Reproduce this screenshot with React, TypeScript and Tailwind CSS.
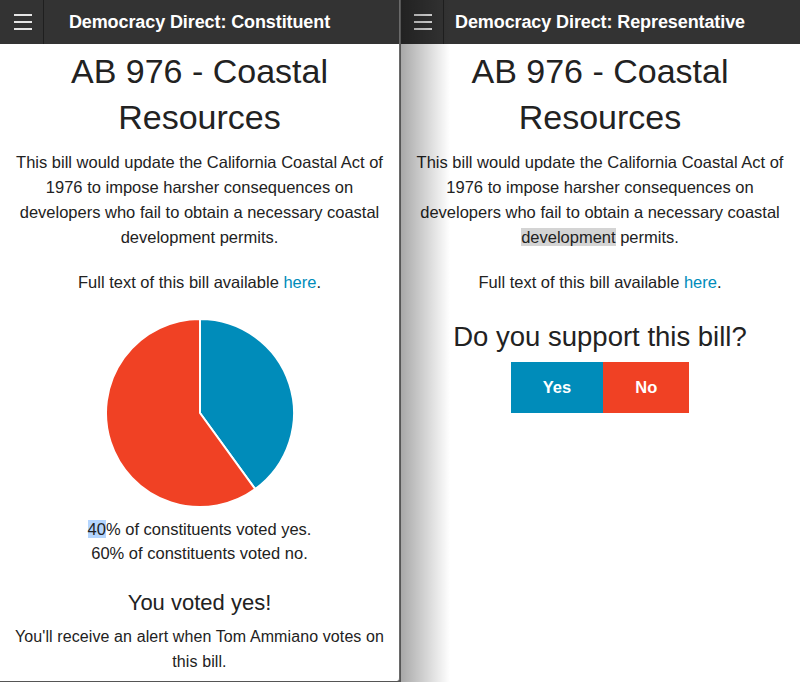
import React from 'react';

const font = "font-['Liberation_Sans','Helvetica_Neue',Helvetica,Arial,sans-serif]";

const Hamburger: React.FC = () => (
  <div className="w-[44px] h-[44px] border-r border-[#1f1f1f] flex flex-col justify-center items-start pl-[14px] gap-[5px] shrink-0">
    <span className="block w-[18px] h-[2px] bg-[#e5e5e5]" />
    <span className="block w-[18px] h-[2px] bg-[#e5e5e5]" />
    <span className="block w-[18px] h-[2px] bg-[#e5e5e5]" />
  </div>
);

const TabBar: React.FC<{ title: string }> = ({ title }) => (
  <div className="relative h-[44px] bg-[#333333] flex items-center">
    <Hamburger />
    <h2 className="absolute inset-0 flex items-center justify-center text-white font-bold text-[18px] tracking-[-0.1px] pointer-events-none">
      {title}
    </h2>
  </div>
);

const BillInfo: React.FC<{ highlight?: boolean }> = ({ highlight }) => (
  <>
    <h1 className="mt-[4px] mb-[10px] text-[34px] leading-[46px] text-[#222]">AB 976 - Coastal Resources</h1>
    <p className="text-[16.5px] leading-[25px] mb-[20px]">
      This bill would update the California Coastal Act of 1976 to impose harsher consequences on developers who fail
      to obtain a necessary coastal{' '}
      {highlight ? <span className="bg-[#d4d4d4]">development</span> : 'development'} permits.
    </p>
    <p className="text-[16.5px] leading-[25px] mb-[20px]">
      Full text of this bill available <a href="#" className="text-[#008cba]">here</a>.
    </p>
  </>
);

const Pie: React.FC<{ yes: number }> = ({ yes }) => {
  const r = 94;
  const c = 95;
  const a = (yes / 100) * Math.PI * 2;
  const x = c + r * Math.sin(a);
  const y = c - r * Math.cos(a);
  const large = yes > 50 ? 1 : 0;
  return (
    <svg width="190" height="190" viewBox="0 0 190 190" className="mx-auto">
      <path d={`M${c},${c} L${c},${c - r} A${r},${r} 0 ${large} 1 ${x},${y} Z`} fill="#008cba" stroke="#fff" strokeWidth="2" />
      <path d={`M${c},${c} L${x},${y} A${r},${r} 0 ${1 - large} 1 ${c},${c - r} Z`} fill="#f04124" stroke="#fff" strokeWidth="2" />
    </svg>
  );
};

export default function App() {
  return (
    <div className={`${font} flex w-[800px] h-[682px] overflow-hidden bg-[#555] text-[#222]`}>
      {/* Constituent view */}
      <div className="w-[400px] h-[681px] bg-white rounded-br-[3px] border-r border-[#6a6a6a] flex flex-col">
        <TabBar title="Democracy Direct: Constituent" />
        <div className="px-[12px] text-center">
          <BillInfo />
          <div className="pt-[3px]">
            <Pie yes={40} />
          </div>
          <p className="mt-[9px] text-[16.5px] leading-[24px]">
            <span className="bg-[#b4d5fe]">40</span>% of constituents voted yes.
            <br />
            60% of constituents voted no.
          </p>
          <h4 className="mt-[22px] text-[22px] leading-[31px]">You voted yes!</h4>
          <p className="mt-[6px] text-[16px] leading-[25px] tracking-[0.1px]">
            You'll receive an alert when Tom Ammiano votes on this bill.
          </p>
        </div>
      </div>

      {/* Representative view */}
      <div className="relative w-[400px] h-[682px] bg-white flex flex-col">
        <TabBar title="Democracy Direct: Representative" />
        <div className="px-[12px] text-center">
          <BillInfo highlight />
          <h3 className="pt-[3px] text-[27.5px] leading-[38px]">Do you support this bill?</h3>
          <div className="mt-[6px] flex justify-center">
            <button className="h-[51px] px-[32px] bg-[#008cba] text-white font-bold text-[16.5px]">Yes</button>
            <button className="h-[51px] px-[32px] bg-[#f04124] text-white font-bold text-[16.5px]">No</button>
          </div>
        </div>
        {/* shadow cast by the panel on the left */}
        <div className="absolute left-0 top-0 bottom-0 w-[50px] pointer-events-none border-l border-[#555] bg-[linear-gradient(to_right,rgba(0,0,0,0.34),rgba(0,0,0,0))]" />
      </div>
    </div>
  );
}
